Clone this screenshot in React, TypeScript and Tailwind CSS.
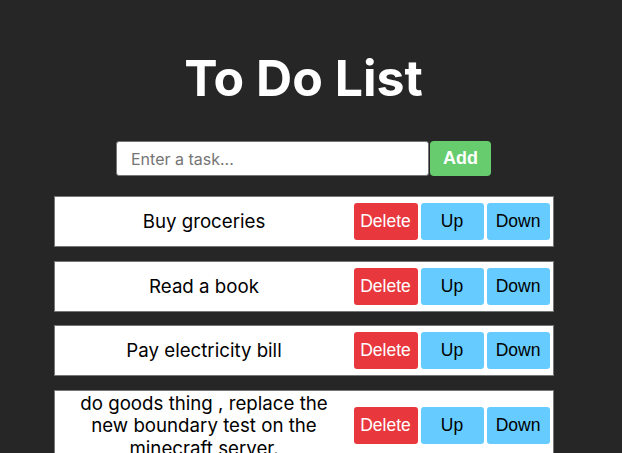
import React from "react";

const tasks = [
  "Buy groceries",
  "Read a book",
  "Pay electricity bill",
  "do goods thing , replace the new boundary test on the minecraft server.",
];

export default function App() {
  return (
    <div
      className="min-h-[453px] w-full bg-[#262626]"
      style={{ fontFamily: "Inter, 'Liberation Sans', sans-serif" }}
    >
      <div className="w-[607px] flex flex-col items-center">
        <h1 className="mt-[48px] text-[50px] leading-[60px] font-bold text-white">
          To Do List
        </h1>
        <div className="mt-[33px] flex items-center">
          <input
            className="w-[313px] h-[35px] rounded-[3px] border border-[#767676] bg-white pl-[14px] text-[16px] text-black placeholder:text-[#757575] outline-none"
            placeholder="Enter a task..."
          />
          <button className="ml-[1px] h-[35px] w-[61px] rounded-[4px] bg-[#66cc6e] text-white text-[18px] font-bold font-['Liberation_Sans',Arial,sans-serif]">
            Add
          </button>
        </div>
        <div className="mt-[20px] flex flex-col gap-[13.5px] w-[500px]">
          {tasks.map((t) => (
            <div
              key={t}
              className="flex items-center border border-[#767676] bg-white min-h-[51px]"
            >
              <div className="flex-1 px-[20px] pt-[2px] text-center text-[18.7px] leading-[22.5px] text-black">
                {t}
              </div>
              <div className="flex gap-[3px] pr-[3px] my-[6px] font-['Liberation_Sans',Arial,sans-serif] text-[17.5px]">
                <button className="h-[37px] w-[64px] rounded-[3px] bg-[#e8383d] text-white">
                  Delete
                </button>
                <button className="h-[37px] w-[63px] rounded-[3px] bg-[#66ccff] text-black">
                  Up
                </button>
                <button className="h-[37px] w-[63px] rounded-[3px] bg-[#66ccff] text-black">
                  Down
                </button>
              </div>
            </div>
          ))}
        </div>
      </div>
    </div>
  );
}
